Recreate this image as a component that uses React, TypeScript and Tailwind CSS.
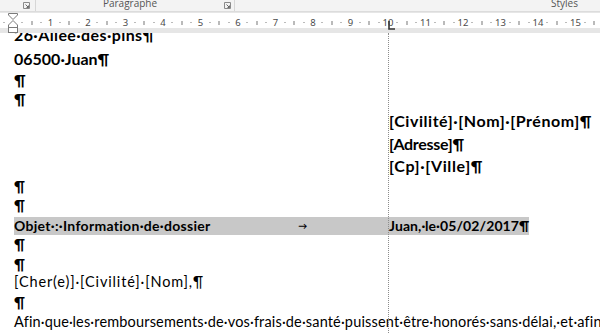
import React from "react";

const LauncherIcon = () => (
  <svg width="7" height="7" viewBox="0 0 7 7" className="shrink-0">
    <path d="M0.5 0.5 H6.5 V6.5 H0.5 Z" fill="none" stroke="#8a8a8a" strokeWidth="1" />
    <path d="M2.5 2.5 L5.5 5.5 M3.5 5.5 H5.5 V3.5" fill="none" stroke="#6a6a6a" strokeWidth="1" />
  </svg>
);

const Ruler = () => {
  const x0 = 13;
  const cm = 37.5;
  const marks: React.ReactNode[] = [];
  for (let n = -1; n <= 15; n++) {
    const x = x0 + n * cm;
    if (n > 0) {
      marks.push(
        <text key={`n${n}`} x={x} y={26} fontSize="9.5" textAnchor="middle" fill="#4a4a4a" fontFamily="'Noto Sans', sans-serif">
          {n}
        </text>
      );
    }
    marks.push(<rect key={`a${n}`} x={Math.round(x + cm / 4) - 0.5} y={22} width="1" height="1" fill="#777" />);
    marks.push(<rect key={`b${n}`} x={Math.round(x + (cm * 3) / 4) - 0.5} y={22} width="1" height="1" fill="#777" />);
    marks.push(<rect key={`c${n}`} x={Math.round(x + cm / 2) - 0.5} y={21} width="1" height="4" fill="#777" />);
  }
  return (
    <svg width="600" height="21" viewBox="0 12 600 21" className="block">
      <rect x="0" y="12" width="600" height="21" fill="#e6e6e6" />
      <rect x="0" y="13" width="600" height="15" fill="#ffffff" />
      {marks}
      {/* indent markers */}
      <path d="M8.5 13.5 H17.5 V15 L13 19.5 L8.5 15 Z" fill="#fff" stroke="#7a7a7a" />
      <path d="M13 20.5 L17.5 25 V27.5 H8.5 V25 Z" fill="#fff" stroke="#7a7a7a" />
      <rect x="8.5" y="27.5" width="9" height="5" fill="#fff" stroke="#7a7a7a" />
      {/* tab stop */}
      <path d="M389 21 V29 H395" fill="none" stroke="#333" strokeWidth="1.6" />
    </svg>
  );
};

const P = "¶";

const App = () => {
  return (
    <div className="w-[600px] h-[333px] overflow-hidden bg-white relative flex flex-col">
      <div className="h-[12px] shrink-0 bg-[#f3f3f3] border-b border-[#dcdcdc] flex items-start font-['Open_Sans',sans-serif] text-[10px] text-[#555] leading-[7px]">
        <div className="pl-[23px] pt-[2px]">
          <LauncherIcon />
        </div>
        <div className="ml-[5px] w-px h-[11px] bg-[#d6d6d6]" />
        <div className="w-[188px] text-center">Paragraphe</div>
        <div className="pt-[2px]">
          <LauncherIcon />
        </div>
        <div className="ml-[3px] w-px h-[11px] bg-[#d6d6d6]" />
        <div className="flex-1 text-right pr-[22px]">Styles</div>
      </div>
      <Ruler />
      <div className="flex-1 overflow-hidden bg-white font-['Lato',sans-serif] text-black pl-[14px]">
        <div className="-mt-[8px] flex flex-col leading-[20px] whitespace-nowrap">
          <div className="h-[24px] font-bold text-[16px] tracking-[0.4px]">26·Allee·des·pins{P}</div>
          <div className="h-[21px] font-bold text-[16px]">06500·Juan{P}</div>
          <div className="h-[19px] font-bold text-[16px]">{P}</div>
          <div className="h-[22px] font-bold text-[16px]">{P}</div>
          <div className="h-[23px] font-bold text-[16px] pl-[375px] tracking-[0.55px]">[Civilité]·[Nom]·[Prénom]{P}</div>
          <div className="h-[22px] font-bold text-[16px] pl-[375px] -tracking-[0.3px]">[Adresse]{P}</div>
          <div className="h-[20px] font-bold text-[16px] pl-[375px] tracking-[0.6px]">[Cp]·[Ville]{P}</div>
          <div className="h-[19px] font-bold text-[15px]">{P}</div>
          <div className="h-[22px] font-bold text-[15px]">{P}</div>
          <div className="h-[17px] font-bold text-[14px] leading-[18px]">
            <div className="inline-flex h-[18px] bg-[#c8c8c8]">
              <div className="w-[375px] flex">
                <span className="tracking-[0.3px]">Objet·:·Information·de·dossier</span>
                <span className="flex-1 text-center text-[9px] pl-[6px]">→</span>
              </div>
              <span className="tracking-[0.1px]">Juan,·le·05/02/2017{P}</span>
            </div>
          </div>
          <div className="h-[20px] font-bold text-[15px]">{P}</div>
          <div className="h-[18px] font-bold text-[15px]">{P}</div>
          <div className="h-[20px] text-[14.5px] tracking-[0.85px]">[Cher(e)]·[Civilité]·[Nom],{P}</div>
          <div className="h-[20px] font-bold text-[15px]">{P}</div>
          <div className="h-[20px] text-[14.5px] tracking-[0.16px]">
            Afin·que·les·remboursements·de·vos·frais·de·santé·puissent·être·honorés·sans·délai,·et·afin
          </div>
        </div>
      </div>
      <div className="absolute left-[388px] top-[33px] bottom-0 w-0 border-l border-dotted border-[#8c8c8c]" />
    </div>
  );
};

export default App;
